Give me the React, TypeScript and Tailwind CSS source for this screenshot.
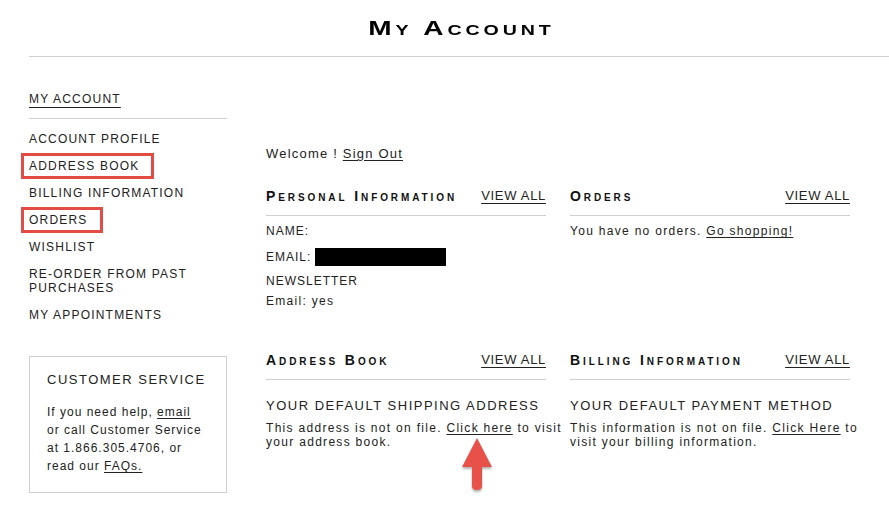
import React from "react";

const navItems = [
  { label: "Account Profile" },
  { label: "Address Book", mark: "w-[133px]" },
  { label: "Billing Information" },
  { label: "Orders", mark: "w-[82px]" },
  { label: "Wishlist" },
  { label: "Re-order from past purchases" },
  { label: "My Appointments" },
];

function SectionHead({ title }: { title: string }) {
  return (
    <div className="w-[280px] flex items-center justify-between border-b border-[#cfcfcf] pb-[11px] leading-[16px]">
      <span className="text-[14px] font-bold tracking-[2.9px] [font-variant-caps:small-caps] text-[#111]">
        {title}
      </span>
      <a className="text-[13px] tracking-[0.7px] underline underline-offset-[3px] text-[#222] cursor-pointer">
        VIEW ALL
      </a>
    </div>
  );
}

function Arrow() {
  return (
    <svg
      className="absolute left-[460px] top-[436px] drop-shadow-[0_2px_1px_rgba(0,0,0,0.3)]"
      width="34"
      height="58"
      viewBox="0 0 34 58"
    >
      <path
        d="M17 2 L32 31 L22 31 L22 50 Q22 54 17 54 Q12 54 12 50 L12 31 L2 31 Z"
        fill="#e8504a"
      />
    </svg>
  );
}

export default function App() {
  return (
    <div className="relative w-[889px] h-[518px] overflow-hidden bg-white text-[#222] font-['Liberation_Sans',Arial,Helvetica,sans-serif]">
      <div className="pl-[29px]">
        <header className="h-[57px] flex items-center justify-center border-b border-[#cfcfcf] pl-[6px]">
          <h1 className="inline-block scale-x-[1.4] text-[20px] font-bold tracking-[2.8px] [font-variant-caps:small-caps] text-black">
            My Account
          </h1>
        </header>

        <div className="flex">
          {/* sidebar */}
          <aside className="w-[198px] pt-[34px]">
            <div className="leading-[14px]">
              <a className="text-[12px] tracking-[1.2px] underline underline-offset-[4px] cursor-pointer">MY ACCOUNT</a>
            </div>
            <div className="mt-[12px] h-px bg-[#cfcfcf]" />
            <ul className="mt-[13px] flex flex-col gap-[13px] text-[12px] leading-[14px] tracking-[1.2px] uppercase">
              {navItems.map((item) => (
                <li key={item.label} className="relative">
                  {item.label}
                  {item.mark && (
                    <span
                      className={`absolute -left-[8px] -top-[6px] h-[26px] border-[3px] border-[#e34b45] ${item.mark}`}
                    />
                  )}
                </li>
              ))}
            </ul>

            <div className="mt-[34px] h-[137px] border border-[#cfcfcf] pl-[17px] pt-[15px]">
              <div className="text-[13px] leading-[16px] tracking-[1.5px]">CUSTOMER SERVICE</div>
              <p className="mt-[15px] text-[12px] leading-[18px] tracking-[1px]">
                <span className="block">
                  If you need help, <a className="underline underline-offset-[2px]">email</a>
                </span>
                <span className="block">or call Customer Service</span>
                <span className="block">at 1.866.305.4706, or</span>
                <span className="block">
                  read our <a className="underline underline-offset-[2px]">FAQs.</a>
                </span>
              </p>
            </div>
          </aside>

          {/* main */}
          <main className="ml-[39px] pt-[89px] text-[12px] tracking-[1.3px]">
            <div className="text-[13px] leading-[16px] tracking-[1.2px]">
              Welcome ! <a className="underline underline-offset-[2px]">Sign Out</a>
            </div>

            <div className="mt-[26px] flex">
              <section className="w-[304px]">
                <SectionHead title="Personal Information" />
                <div className="mt-[7px] leading-[16px] tracking-[1px]">NAME:</div>
                <div className="mt-[9px] h-[18px] flex items-center tracking-[1px]">
                  EMAIL:
                  <span className="ml-[4px] w-[131px] h-[18px] bg-black" />
                </div>
                <div className="mt-[7px] leading-[16px] tracking-[1px]">NEWSLETTER</div>
                <div className="mt-[4px] leading-[16px]">Email: yes</div>
              </section>
              <section className="w-[304px]">
                <SectionHead title="Orders" />
                <div className="mt-[7px] leading-[16px]">
                  You have no orders. <a className="underline underline-offset-[2px]">Go shopping!</a>
                </div>
              </section>
            </div>

            <div className="mt-[43px] flex">
              <section className="w-[304px]">
                <SectionHead title="Address Book" />
                <div className="mt-[18px] text-[13px] leading-[16px] tracking-[1.5px]">YOUR DEFAULT SHIPPING ADDRESS</div>
                <p className="mt-[7px] leading-[14px]">
                  This address is not on file. <a className="underline underline-offset-[2px]">Click here</a> to visit
                  your address book.
                </p>
              </section>
              <section className="w-[304px]">
                <SectionHead title="Billing Information" />
                <div className="mt-[18px] text-[13px] leading-[16px] tracking-[1.5px]">YOUR DEFAULT PAYMENT METHOD</div>
                <p className="mt-[7px] leading-[14px]">
                  This information is not on file. <a className="underline underline-offset-[2px]">Click Here</a> to
                  visit your billing information.
                </p>
              </section>
            </div>
          </main>
        </div>
      </div>
      <Arrow />
    </div>
  );
}
